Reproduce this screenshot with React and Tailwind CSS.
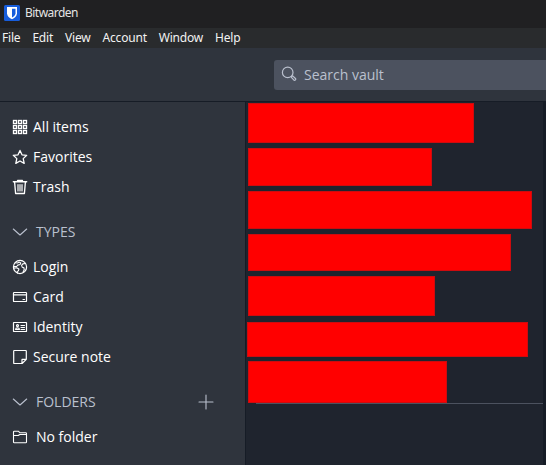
import React from "react";

function Icon({ children, className = "" }) {
  return (
    <svg
      viewBox="0 0 16 16"
      className={`h-4 w-4 shrink-0 ${className}`}
      fill="none"
      stroke="currentColor"
      strokeWidth="1.2"
      strokeLinejoin="round"
      strokeLinecap="round"
    >
      {children}
    </svg>
  );
}

const icons = {
  grid: (
    <Icon>
      {[1.5, 6.5, 11.5].map((y) =>
        [1.5, 6.5, 11.5].map((x) => (
          <rect key={`${x}-${y}`} x={x} y={y} width="3" height="3" strokeWidth="1.35" strokeLinejoin="miter" />
        ))
      )}
    </Icon>
  ),
  star: (
    <Icon>
      <path d="M8 1.4l2 4.4 4.7.5-3.5 3.3 1 4.8L8 12l-4.2 2.4 1-4.8L1.3 6.3 6 5.8z" strokeWidth="1.3" />
    </Icon>
  ),
  trash: (
    <Icon>
      <path d="M1.3 2.700h13.400M5.600 2.500V1.300h4.800v1.200M2.600 3l1 11.500h8.800l1-11.500" strokeWidth="1.35" />
      <path d="M6 5.700v6.300M8 5.700v6.300M10 5.700v6.300" />
    </Icon>
  ),
  globe: (
    <Icon>
      <circle cx="8" cy="8" r="6.6" />
      <path
        d="M3.200 3.700l2.300.3 1.800-.9 1.500.9-.8 1.500-2.200.6-1.200 1.400-3 .1M1.700 9.200l3-.5 2.200 1.300-.5 1.800-1.300.8.3 1.500M13.300 4.500l-2.500.4-1.200 1.500.6 1.800 1.700.5.3 2-1.200 2.500"
        strokeWidth="1.1"
      />
    </Icon>
  ),
  card: (
    <Icon>
      <rect x="1.5" y="3.500" width="13" height="9" rx=".6" />
      <path d="M1.500 5.800h13" strokeWidth="1.300" />
      <path d="M11 10.500h1.500" />
    </Icon>
  ),
  identity: (
    <Icon>
      <rect x="1.500" y="3.500" width="13" height="9" rx=".3" />
      <circle cx="5.500" cy="6.600" r="1" />
      <path d="M3.600 10.500c0-2.300 3.800-2.300 3.800 0zM9 6.500h3.500M9 8.500h3.500M9 10.500h3.500" />
    </Icon>
  ),
  note: (
    <Icon>
      <path d="M2.300 1.500h11.400q.6 0 .6.600v8.200l-4.200 4.200H2.300q-.6 0-.6-.6V2.100q0-.6.600-.600zM10 14.200v-3.900h4" />
    </Icon>
  ),
  folder: (
    <Icon>
      <path d="M1.500 13V3q0-.8.8-.8h4l1.700 1.600h5.700q.8 0 .8.800V13q0 .8-.8.800H2.300q-.8 0-.8-.8zM1.500 6.500h4.700l1.600-1h6.700" strokeWidth="1.100" />
    </Icon>
  ),
};

function NavItem({ icon, label, wide }) {
  return (
    <div className="flex h-[30px] items-center pl-3 text-white">
      {icons[icon]}
      <span className={wide ? "ml-2" : "ml-[5px]"}>{label}</span>
    </div>
  );
}

function Heading({ label, add }) {
  return (
    <div className="mt-[15px] mb-[5px] flex h-[30px] items-center pl-3 text-[#bac0ce]">
      <Icon>
        <path d="M1.3 5l6.700 6 6.700-6" strokeWidth="1.100" />
      </Icon>
      <span className="ml-2">{label}</span>
      {add && (
        <Icon className="mr-[31px] ml-auto">
          <path d="M8 1v14M1 8h14" strokeWidth="1.100" />
        </Icon>
      )}
    </div>
  );
}

const rows = [
  "mt-px ml-[2px] h-[40px] w-[226px]",
  "mt-[5px] ml-[2px] h-[38px] w-[184px]",
  "mt-[5px] ml-[2px] h-[38px] w-[284px]",
  "mt-[5px] ml-[2px] h-[37px] w-[263px]",
  "mt-[5px] ml-[2px] h-[40px] w-[187px]",
  "mt-[6px] ml-px h-[35px] w-[281px]",
  "mt-[4px] ml-[2px] h-[42px] w-[199px]",
];

export default function App() {
  return (
    <div className="flex h-[465px] w-[546px] flex-col overflow-hidden bg-[#2f343d] font-['Open_Sans','Noto_Sans',sans-serif] text-sm">
      <div className="flex h-7 shrink-0 items-center bg-[#202022] pb-[3px] pl-1 text-xs text-[#e4e4e4]">
        <svg viewBox="0 0 16 16" className="h-4 w-4">
          <rect width="16" height="16" rx="1.5" fill="#175ddc" />
          <path d="M3 2h10v6.200c0 2.900-2.600 4.800-5 6-2.400-1.200-5-3.100-5-6z" fill="#fff" />
          <path d="M8 3.700h3.500v4.500c0 1.900-1.700 3.200-3.500 4.200z" fill="#175ddc" />
        </svg>
        <span className="ml-[5px] font-['Noto_Sans',sans-serif] tracking-[-0.52px]">Bitwarden</span>
      </div>
      <div className="flex h-5 shrink-0 items-center gap-3 bg-[#292b2d] pl-[2px] font-['Noto_Sans',sans-serif] text-xs tracking-[-0.2px] text-[#f2f2f2]">
        <span>File</span>
        <span>Edit</span>
        <span>View</span>
        <span>Account</span>
        <span>Window</span>
        <span>Help</span>
      </div>
      <div className="flex h-[54px] shrink-0 items-center border-b border-[#161c26] pl-[274px]">
        <div className="flex h-[30px] flex-1 items-center rounded-l-[3px] bg-[#4c525f] pl-[7px] text-[#bac0ce]">
          <Icon className="mb-[2px]">
            <circle cx="6.700" cy="6.400" r="5.300" />
            <path d="M10.700 10.200l1-.3 3 2.900q.3 1.500-1.500 1.600l-2.800-3z" />
          </Icon>
          <span className="ml-[7px]">Search vault</span>
        </div>
      </div>
      <div className="flex min-h-0 flex-1">
        <nav className="w-[246px] shrink-0 border-r border-[#161c26] pt-[10px]">
          <NavItem icon="grid" label="All items" />
          <NavItem icon="star" label="Favorites" />
          <NavItem icon="trash" label="Trash" />
          <Heading label="TYPES" />
          <NavItem icon="globe" label="Login" />
          <NavItem icon="card" label="Card" />
          <NavItem icon="identity" label="Identity" />
          <NavItem icon="note" label="Secure note" />
          <Heading label="FOLDERS" add />
          <NavItem icon="folder" label="No folder" wide />
        </nav>
        <main className="flex w-[297px] flex-col bg-[#1f242e]">
          {rows.map((size) => (
            <div key={size} className={`shrink-0 border border-[#cf0b0e] bg-[#ff0000] ${size}`} />
          ))}
          <div className="ml-[10px] h-px bg-[#4c525f]" />
        </main>
        <div className="flex-1 bg-[#161c26]" />
      </div>
    </div>
  );
}
